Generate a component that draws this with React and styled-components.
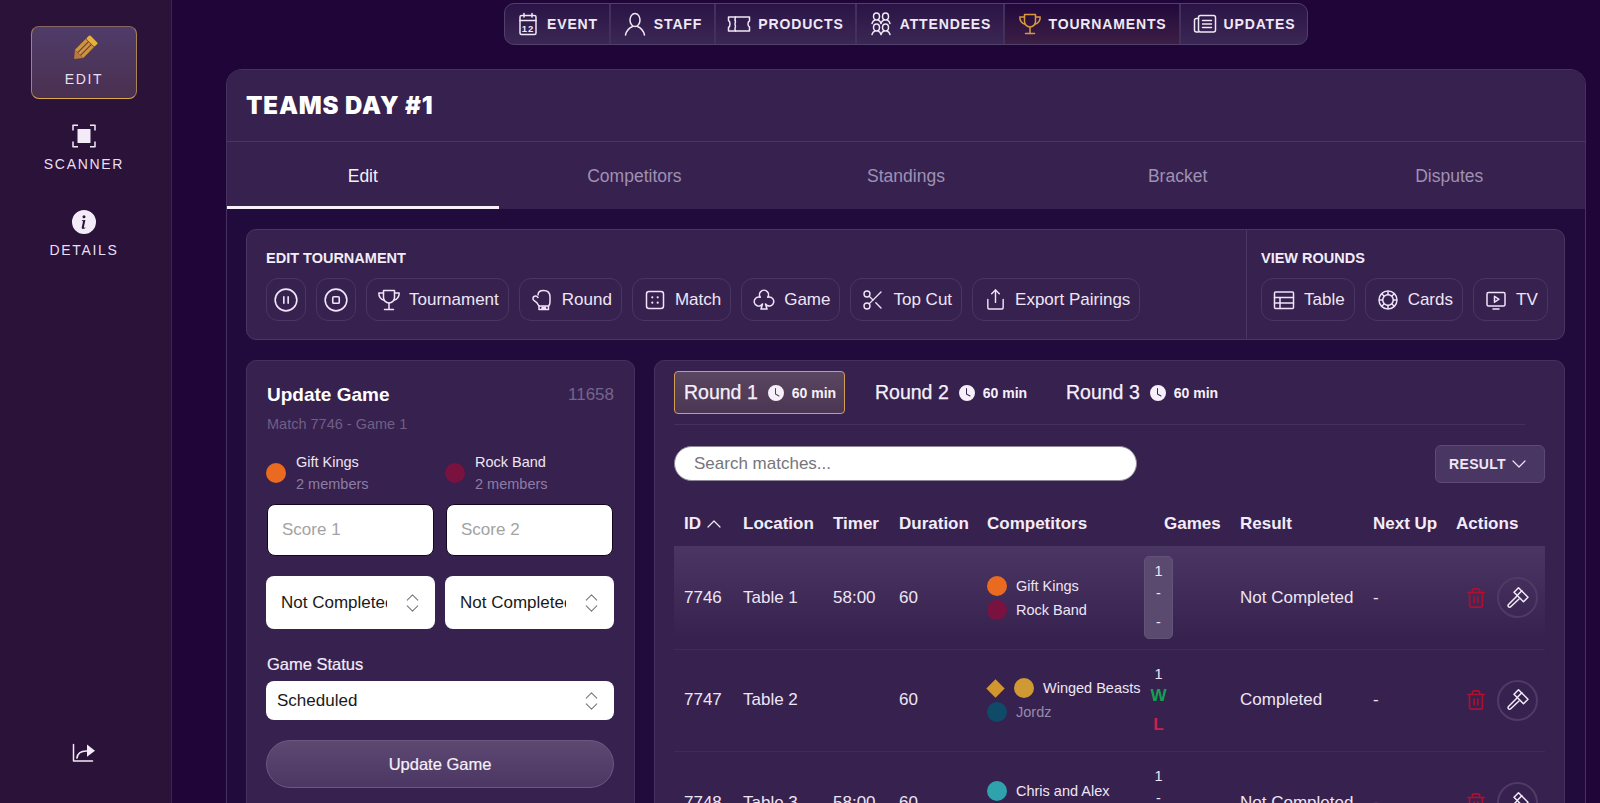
import styled, { createGlobalStyle } from "styled-components";
import {
  ChevronDown,
  ChevronUp,
  CirclePause,
  CircleStop,
  Scissors,
  Share,
  Trash2,
} from "lucide-react";
import { BsClockFill, BsInfoCircleFill } from "react-icons/bs";
import { PiClub, PiMonitorPlay, PiPokerChip } from "react-icons/pi";

const GlobalStyle = createGlobalStyle`
  html, body {
    margin: 0;
    height: 100%;
    overflow: hidden;
    background: #1f0538;
    color: #f3ecf8;
    font-family: "Liberation Sans", Arial, sans-serif;
  }
  * { box-sizing: border-box; }
`;

const Line = ({ children, size = 24 }) => (
  <svg width={size} height={size} viewBox="0 0 24 24" fill="none" stroke="currentColor" strokeWidth="1.5" strokeLinecap="round" strokeLinejoin="round">
    {children}
  </svg>
);

const PencilIcon = () => (
  <svg width="28" height="28" viewBox="0 0 24 24">
    <g transform="rotate(45 12 12)">
      <rect x="7" y="0" width="10" height="4.5" rx="1" fill="#e6b23c" />
      <rect x="7" y="5" width="10" height="13" fill="#d0923a" />
      <path d="M7 18h10l-5 6z" fill="#b9793a" />
      <path d="M10.300 5v13M13.700 5v13" stroke="#5a3f52" strokeWidth="0.9" />
    </g>
  </svg>
);

const ScannerIcon = () => (
  <Line>
    <path d="M1 6.500V1.200h5M23 6.500V1.200h-5M1 17.500v5.300h5M23 17.500v5.300h-5" strokeWidth="1.5" strokeLinecap="butt" />
    <rect x="5.500" y="5" width="13" height="14" fill="currentColor" stroke="none" />
  </Line>
);

const ExportIcon = () => (
  <Line>
    <path d="M1.500 3.500v16.500h19" />
    <path d="M5 17c.6-4.800 4.500-7.200 10-7" strokeWidth="1.700" />
    <path d="M15 3.500l8 6.300-8 6z" fill="currentColor" stroke="none" />
  </Line>
);

const CalendarIcon = () => (
  <Line>
    <rect x="4" y="3.500" width="16" height="19" rx="1.500" />
    <path d="M4 8.500h16M8 1.500v3.500M16 1.500v3.500" />
    <text x="12" y="19.500" textAnchor="middle" fontSize="9.500" fill="currentColor" stroke="none" fontFamily="Liberation Sans">12</text>
  </Line>
);

const StaffIcon = () => (
  <Line>
    <ellipse cx="12" cy="8" rx="5" ry="6.500" />
    <path d="M2.500 23c1-4.500 3.500-7 7-8.500M21.500 23c-1-4.500-3.500-7-7-8.500" />
  </Line>
);

const TicketIcon = () => (
  <Line>
    <path d="M1.500 5h21v4c-2 .7-2 5.300 0 6v4h-21v-3.500c2-1 2-6 0-7z" />
    <path d="M8.500 5c-.8 2-.8 3.500 0 4.500-.8 2-.8 3.500 0 5-.8 1.500-.8 3 0 4.500" />
  </Line>
);

const AttendeesIcon = () => (
  <Line>
    <ellipse cx="7.500" cy="4.500" rx="3" ry="3.500" />
    <ellipse cx="16.500" cy="4.500" rx="3" ry="3.500" />
    <path d="M3 11.500c.5-2 1.500-3 3-3.500M12 11.500c-.5-2-1.500-3-3-3.500M12 11.500c.5-2 1.500-3 3-3.500M21 11.500c-.5-2-1.500-3-3-3.500" />
    <ellipse cx="7.500" cy="15.500" rx="3" ry="3.500" />
    <ellipse cx="16.500" cy="15.500" rx="3" ry="3.500" />
    <path d="M3 22.500c.5-2 1.500-3 3-3.500M12 22.500c-.5-2-1.500-3-3-3.500M12 22.500c.5-2 1.500-3 3-3.500M21 22.500c-.5-2-1.500-3-3-3.500" />
  </Line>
);

const TrophyIcon = () => (
  <Line>
    <path d="M6.500 2.500h11v7a5.500 5.500 0 0 1-11 0z" />
    <path d="M6.500 5H1.800c0 4 2 6.500 5.500 7.300M17.500 5h4.700c0 4-2 6.500-5.500 7.300M12 15v6M7.500 21.500h9" />
  </Line>
);

const NewsIcon = () => (
  <Line>
    <rect x="5.500" y="3.500" width="17" height="16.500" rx="2" />
    <path d="M5.500 6.500H3.500a2 2 0 0 0-2 2V18a2 2 0 0 0 2 2h2M9.500 8.500h9M9.500 12h9M9.500 15.500h9" />
  </Line>
);

const GloveIcon = () => (
  <Line>
    <path d="M8 7C8 4 10 2.500 13.500 2.500c4 0 6.500 2.500 6.500 6.500v5c0 1.500-.5 3-1.500 4H9c-.8-1-1.500-2-2-3.200L3.500 12C2.500 10.500 3 8.800 4.500 8.200c1.300-.5 2.500 0 3.500 1.300" />
    <path d="M9 18v3.500h9.500V18M12 19l3.500 1.500M15.500 19L12 20.500" />
  </Line>
);

const DiceIcon = () => (
  <Line>
    <rect x="3.500" y="3.500" width="17" height="17" rx="2.500" />
    <g fill="currentColor" stroke="none">
      <circle cx="9.300" cy="9.300" r="1.100" />
      <circle cx="14.700" cy="9.300" r="1.100" />
      <circle cx="9.300" cy="14.700" r="1.100" />
      <circle cx="14.700" cy="14.700" r="1.100" />
    </g>
  </Line>
);

const TableIcon = () => (
  <Line>
    <rect x="2.500" y="4" width="19" height="16.500" rx="1" />
    <path d="M2.500 9.500h19M2.500 15h19M8 9.500v11" />
  </Line>
);

const GavelIcon = () => (
  <Line>
    <path d="M12.500 1.800l9.500 9.500-4.500 4.500L8 6.300z" />
    <path d="M15.800 4.800l-4.600 4.700" />
    <path d="M10.500 10.500l-8 8a1.500 1.500 0 0 0 2.200 2.200l8.300-7.700" />
  </Line>
);

const navItems = [
  { label: "EVENT", icon: <CalendarIcon /> },
  { label: "STAFF", icon: <StaffIcon /> },
  { label: "PRODUCTS", icon: <TicketIcon /> },
  { label: "ATTENDEES", icon: <AttendeesIcon /> },
  { label: "TOURNAMENTS", icon: <TrophyIcon />, active: true },
  { label: "UPDATES", icon: <NewsIcon /> },
];

const tabs = ["Edit", "Competitors", "Standings", "Bracket", "Disputes"];

const editTools = [
  { icon: <CirclePause size={26} strokeWidth={1.5} /> },
  { icon: <CircleStop size={26} strokeWidth={1.5} /> },
  { label: "Tournament", icon: <TrophyIcon /> },
  { label: "Round", icon: <GloveIcon /> },
  { label: "Match", icon: <DiceIcon /> },
  { label: "Game", icon: <PiClub size={24} /> },
  { label: "Top Cut", icon: <Scissors size={24} strokeWidth={1.4} /> },
  { label: "Export Pairings", icon: <Share size={23} strokeWidth={1.5} /> },
];

const viewTools = [
  { label: "Table", icon: <TableIcon /> },
  { label: "Cards", icon: <PiPokerChip size={24} /> },
  { label: "TV", icon: <PiMonitorPlay size={24} /> },
];

const rounds = ["Round 1", "Round 2", "Round 3"];

const columns = ["ID", "Location", "Timer", "Duration", "Competitors", "Games", "Result", "Next Up", "Actions"];

const matches = [
  {
    id: 7746,
    location: "Table 1",
    timer: "58:00",
    duration: 60,
    teams: [
      { name: "Gift Kings", color: "#ea6a1f" },
      { name: "Rock Band", color: "#7a1240" },
    ],
    games: ["1", "-", "-"],
    result: "Not Completed",
    current: true,
  },
  {
    id: 7747,
    location: "Table 2",
    timer: "",
    duration: 60,
    teams: [
      { name: "Winged Beasts", color: "#cf9a33", seeded: true },
      { name: "Jordz", color: "#0f4a68", out: true },
    ],
    games: ["1", "W", "L"],
    result: "Completed",
  },
  {
    id: 7748,
    location: "Table 3",
    timer: "58:00",
    duration: 60,
    teams: [
      { name: "Chris and Alex", color: "#2fa3ad" },
      { name: "Rock Band", color: "#7a1240" },
    ],
    games: ["1", "-", "-"],
    result: "Not Completed",
  },
];

const Steps = () => (
  <Stepper>
    <ChevronUp size={21} strokeWidth={1.2} />
    <ChevronDown size={21} strokeWidth={1.2} />
  </Stepper>
);

const App = () => (
  <Page>
    <GlobalStyle />
    <Sidebar>
      <SideItem $active>
        <PencilIcon />
        <SideLabel>EDIT</SideLabel>
      </SideItem>
      <SideItem>
        <ScannerIcon />
        <SideLabel>SCANNER</SideLabel>
      </SideItem>
      <SideItem>
        <BsInfoCircleFill size={24} />
        <SideLabel>DETAILS</SideLabel>
      </SideItem>
      <SideExport>
        <ExportIcon />
      </SideExport>
    </Sidebar>

    <Main>
      <TopNav>
        {navItems.map((item) => (
          <NavItem key={item.label} $active={item.active}>
            <NavIcon $active={item.active}>{item.icon}</NavIcon>
            {item.label}
          </NavItem>
        ))}
      </TopNav>

      <Card>
        <CardHeader>
          <Title>TEAMS DAY #1</Title>
        </CardHeader>
        <Tabs>
          {tabs.map((tab, i) => (
            <Tab key={tab} $active={i === 0}>
              {tab}
            </Tab>
          ))}
        </Tabs>

        <CardBody>
          <Toolbar>
            <ToolGroup>
              <ToolTitle>EDIT TOURNAMENT</ToolTitle>
              <ToolRow>
                {editTools.map((tool, i) => (
                  <ToolButton key={i} $round={!tool.label}>
                    <ToolIcon>{tool.icon}</ToolIcon>
                    {tool.label}
                  </ToolButton>
                ))}
              </ToolRow>
            </ToolGroup>
            <ViewGroup>
              <ToolTitle>VIEW ROUNDS</ToolTitle>
              <ToolRow>
                {viewTools.map((tool) => (
                  <ToolButton key={tool.label}>
                    <ToolIcon>{tool.icon}</ToolIcon>
                    {tool.label}
                  </ToolButton>
                ))}
              </ToolRow>
            </ViewGroup>
          </Toolbar>

          <Columns>
            <GamePanel>
              <GameHead>
                <GameTitle>Update Game</GameTitle>
                <GameId>11658</GameId>
              </GameHead>
              <GameSub>Match 7746 - Game 1</GameSub>
              <TwoCols>
                <TeamInfo>
                  <Dot $color="#ea6a1f" />
                  <div>
                    <TeamName>Gift Kings</TeamName>
                    <TeamMeta>2 members</TeamMeta>
                  </div>
                </TeamInfo>
                <TeamInfo>
                  <Dot $color="#7a1240" />
                  <div>
                    <TeamName>Rock Band</TeamName>
                    <TeamMeta>2 members</TeamMeta>
                  </div>
                </TeamInfo>
              </TwoCols>
              <ScoreRow>
                <ScoreInput placeholder="Score 1" />
                <ScoreInput placeholder="Score 2" />
              </ScoreRow>
              <SelectRow>
                <SelectWrap>
                  <StatusSelect defaultValue="nc">
                    <option value="nc">Not Completed</option>
                  </StatusSelect>
                  <Steps />
                </SelectWrap>
                <SelectWrap>
                  <StatusSelect defaultValue="nc">
                    <option value="nc">Not Completed</option>
                  </StatusSelect>
                  <Steps />
                </SelectWrap>
              </SelectRow>
              <FieldLabel>Game Status</FieldLabel>
              <SelectWrap>
                <WideSelect defaultValue="s">
                  <option value="s">Scheduled</option>
                </WideSelect>
                <Steps />
              </SelectWrap>
              <UpdateButton>Update Game</UpdateButton>
            </GamePanel>

            <MatchPanel>
              <RoundBar>
                {rounds.map((round, i) => (
                  <RoundTab key={round} $active={i === 0}>
                    <RoundName>{round}</RoundName>
                    <BsClockFill size={16} />
                    <RoundTime>60 min</RoundTime>
                  </RoundTab>
                ))}
              </RoundBar>
              <FilterRow>
                <SearchInput placeholder="Search matches..." />
                <ResultFilter>
                  RESULT
                  <ChevronDown size={24} strokeWidth={1.2} />
                </ResultFilter>
              </FilterRow>
              <HeadRow>
                {columns.map((col) => (
                  <HeadCell key={col} $games={col === "Games"}>
                    {col}
                    {col === "ID" && <ChevronUp size={24} strokeWidth={1.2} />}
                  </HeadCell>
                ))}
              </HeadRow>
              {matches.map((match) => (
                <MatchRow key={match.id} $current={match.current}>
                  <Cell>{match.id}</Cell>
                  <Cell>{match.location}</Cell>
                  <Cell>{match.timer}</Cell>
                  <Cell>{match.duration}</Cell>
                  <Cell>
                    <TeamStack>
                      {match.teams.map((team) => (
                        <TeamLine key={team.name} $out={team.out}>
                          {team.seeded && <Seed />}
                          <Dot $color={team.color} />
                          {team.name}
                        </TeamLine>
                      ))}
                    </TeamStack>
                  </Cell>
                  <GamesCell>
                    <GamesStack $current={match.current}>
                      {match.games.map((g, i) => (
                        <GameScore key={i} $value={g} $last={i === 2}>
                          {g}
                        </GameScore>
                      ))}
                    </GamesStack>
                  </GamesCell>
                  <Cell>{match.result}</Cell>
                  <Cell>-</Cell>
                  <ActionCell>
                    <TrashIcon>
                      <Trash2 size={22} strokeWidth={1.8} />
                    </TrashIcon>
                    <GavelButton>
                      <GavelIcon />
                    </GavelButton>
                  </ActionCell>
                </MatchRow>
              ))}
            </MatchPanel>
          </Columns>
        </CardBody>
      </Card>
    </Main>
  </Page>
);

export default App;

const Page = styled.div`
  display: flex;
  height: 100vh;
  overflow: hidden;
`;

const Sidebar = styled.aside`
  flex: 0 0 172px;
  display: flex;
  flex-direction: column;
  align-items: center;
  gap: 13px;
  padding: 26px 3px 38px 0;
  background: #2a1239;
  border-right: 1px solid #3a2450;
`;

const SideItem = styled.div`
  width: 106px;
  height: 73px;
  display: flex;
  flex-direction: column;
  align-items: center;
  padding-top: 12px;
  border-radius: 8px;
  ${(p) =>
    p.$active &&
    `
    padding-top: 8px;
    background: linear-gradient(180deg, #4f3c69 0%, #4a3050 100%);
    border: 1.5px solid #a98454;
    border-top-color: #86665f;
    border-bottom-color: #dca94c;
  `}
`;

const SideLabel = styled.span`
  margin-top: 7px;
  font-size: 14px;
  line-height: 18px;
  letter-spacing: 1.7px;
  color: #eadff2;
`;

const SideExport = styled.div`
  margin-top: auto;
  height: 24px;
`;

const Main = styled.main`
  flex: 1;
  min-width: 0;
  display: flex;
  flex-direction: column;
  align-items: center;
  padding: 3px 14px 0 54px;
`;

const TopNav = styled.nav`
  display: grid;
  grid-template-columns: 106px 105px 141px 148px 176px 126px;
  height: 42px;
  flex: none;
  background: linear-gradient(180deg, #2a1446 0%, #3b2754 100%);
  border: 1px solid #51406a;
  border-radius: 10px;
  overflow: hidden;
`;

const NavItem = styled.div`
  display: flex;
  align-items: center;
  justify-content: center;
  gap: 7px;
  font-size: 14px;
  font-weight: 700;
  letter-spacing: 0.85px;
  color: #efe8f5;
  border-right: 2px solid #43305c;
  &:last-child {
    border-right: none;
  }
  ${(p) => p.$active && `background: linear-gradient(180deg, #22093c 0%, #3c1f44 100%);`}
`;

const NavIcon = styled.span`
  display: flex;
  color: ${(p) => (p.$active ? "#d89a3c" : "#efe8f5")};
`;

const Card = styled.section`
  margin-top: 24px;
  width: 100%;
  flex: 1;
  background: #210a3c;
  border: 1px solid #463260;
  border-bottom: none;
  border-radius: 16px 16px 0 0;
  overflow: hidden;
`;

const CardHeader = styled.header`
  height: 72px;
  display: flex;
  align-items: center;
  padding-left: 19px;
  background: #37214f;
  border-bottom: 1px solid #4a3663;
`;

const Title = styled.h1`
  margin: 0;
  font-family: Inter, "Liberation Sans", sans-serif;
  font-size: 24px;
  font-weight: 900;
  letter-spacing: 0.85px;
  color: #fff;
`;

const Tabs = styled.div`
  display: grid;
  grid-template-columns: repeat(5, 1fr);
  height: 67px;
  background: #37214f;
`;

const Tab = styled.div`
  display: flex;
  align-items: center;
  justify-content: center;
  padding-top: 4px;
  font-size: 17.500px;
  color: ${(p) => (p.$active ? "#f6f0fa" : "#9f91b3")};
  border-bottom: 3px solid ${(p) => (p.$active ? "#f6f0fa" : "transparent")};
`;

const CardBody = styled.div`
  padding: 20px 20px 0 19px;
`;

const Toolbar = styled.div`
  display: flex;
  height: 111px;
  background: #37214f;
  border: 1px solid #4a3663;
  border-radius: 10px;
`;

const ToolGroup = styled.div`
  flex: 1;
  padding: 19px 0 0 19px;
`;

const ViewGroup = styled.div`
  flex: 0 0 318px;
  padding: 19px 0 0 14px;
  border-left: 1px solid #4a3663;
`;

const ToolTitle = styled.h3`
  margin: 0 0 10px;
  font-size: 14.500px;
  line-height: 19px;
  font-weight: 700;
  color: #f3ecf8;
`;

const ToolRow = styled.div`
  display: flex;
  gap: 10px;
`;

const ToolButton = styled.div`
  display: flex;
  align-items: center;
  justify-content: ${(p) => (p.$round ? "center" : "flex-start")};
  gap: 8px;
  height: 43px;
  width: ${(p) => (p.$round ? "40px" : "auto")};
  padding: ${(p) => (p.$round ? "0" : "0 9px 0 10px")};
  font-size: 17px;
  color: #eee6f4;
  border: 1px solid #4a3663;
  border-radius: 12px;
`;

const ToolIcon = styled.span`
  display: flex;
  align-items: center;
  justify-content: center;
  min-width: 24px;
  color: #efe4f8;
`;

const Columns = styled.div`
  display: flex;
  gap: 19px;
  margin-top: 20px;
  align-items: flex-start;
`;

const GamePanel = styled.div`
  flex: 0 0 389px;
  height: 500px;
  padding: 19px 20px 0 19px;
  background: #37214f;
  border: 1px solid #453160;
  border-radius: 10px;
`;

const GameHead = styled.div`
  display: flex;
  align-items: center;
  justify-content: space-between;
  height: 30px;
  padding-left: 1px;
`;

const GameTitle = styled.h2`
  margin: 0;
  font-size: 19px;
  font-weight: 700;
  color: #fff;
`;

const GameId = styled.span`
  font-size: 17px;
  color: #75658c;
`;

const GameSub = styled.p`
  margin: 4px 0 0 1px;
  font-size: 14.500px;
  line-height: 20px;
  color: #6f5f87;
`;

const TwoCols = styled.div`
  display: grid;
  grid-template-columns: 169px 169px;
  gap: 10px;
  margin-top: 17px;
`;

const TeamInfo = styled.div`
  display: flex;
  align-items: center;
  gap: 10px;
`;

const Dot = styled.span`
  flex: none;
  width: 20px;
  height: 20px;
  border-radius: 50%;
  background: ${(p) => p.$color};
`;

const TeamName = styled.div`
  font-size: 14.500px;
  line-height: 22px;
  color: #eee6f4;
`;

const TeamMeta = styled.div`
  font-size: 14.500px;
  line-height: 22px;
  color: #8d7da5;
`;

const ScoreRow = styled(TwoCols)`
  margin-top: 9px;
  padding: 0 1px;
  grid-template-columns: 167px 167px;
  gap: 12px;
`;

const ScoreInput = styled.input`
  height: 52px;
  width: 100%;
  padding: 0 14px;
  background: #fff;
  border: 1px solid #150622;
  border-radius: 8px;
  font-family: inherit;
  font-size: 17px;
  outline: none;
  &::placeholder {
    color: #a3a3a3;
    opacity: 1;
  }
`;

const SelectRow = styled(TwoCols)`
  margin-top: 20px;
`;

const SelectWrap = styled.div`
  position: relative;
`;

const StatusSelect = styled.select`
  display: block;
  appearance: none;
  width: 100%;
  height: 53px;
  padding: 0 48px 0 15px;
  background: #fff;
  color: #1a1a1a;
  border: none;
  border-radius: 8px;
  font-family: inherit;
  font-size: 17px;
  outline: none;
`;

const WideSelect = styled(StatusSelect)`
  height: 39px;
  padding-left: 11px;
`;

const Stepper = styled.span`
  position: absolute;
  top: 50%;
  right: 12px;
  transform: translateY(-50%);
  display: flex;
  flex-direction: column;
  color: #777;
  pointer-events: none;
  svg + svg {
    margin-top: -10px;
  }
`;

const FieldLabel = styled.div`
  margin: 23px 0 5px 1px;
  font-size: 16.500px;
  line-height: 24px;
  color: #f3ecf8;
  -webkit-text-stroke: 0.2px currentColor;
`;

const UpdateButton = styled.div`
  display: flex;
  align-items: center;
  justify-content: center;
  height: 48px;
  margin-top: 20px;
  background: linear-gradient(180deg, #5d4872 0%, #4c3764 100%);
  border: 1px solid #6b5880;
  border-radius: 24px;
  font-size: 16.500px;
  color: #f6f0fa;
  -webkit-text-stroke: 0.2px currentColor;
`;

const MatchPanel = styled.div`
  flex: 1;
  min-width: 0;
  height: 500px;
  padding: 10px 19px 0;
  background: #37214f;
  border: 1px solid #453160;
  border-radius: 10px;
`;

const RoundBar = styled.div`
  display: flex;
  gap: 20px;
  height: 54px;
  padding-bottom: 10px;
  margin-right: 20px;
  border-bottom: 1px solid #453160;
`;

const RoundTab = styled.div`
  width: 171px;
  display: flex;
  align-items: center;
  gap: 7px;
  padding-left: 9px;
  border: 1px solid transparent;
  border-radius: 4px;
  color: #f6f0fa;
  ${(p) =>
    p.$active &&
    `
    background: linear-gradient(180deg, #5b4661 0%, #4b3653 100%);
    border-color: #d19f59;
  `}
`;

const RoundName = styled.span`
  margin-right: 3px;
  font-size: 19.500px;
  -webkit-text-stroke: 0.25px currentColor;
`;

const RoundTime = styled.span`
  margin-left: 1px;
  font-size: 14px;
  font-weight: 700;
`;

const FilterRow = styled.div`
  display: flex;
  align-items: flex-start;
  justify-content: space-between;
  height: 38px;
  margin-top: 20px;
`;

const SearchInput = styled.input`
  width: 463px;
  height: 35px;
  margin-top: 1px;
  padding: 0 19px;
  background: #fff;
  border: 1px solid #8d8799;
  border-radius: 18px;
  font-family: inherit;
  font-size: 17px;
  outline: none;
  &::placeholder {
    color: #75757b;
    opacity: 1;
  }
`;

const ResultFilter = styled.div`
  width: 110px;
  height: 38px;
  display: flex;
  align-items: center;
  justify-content: center;
  gap: 1px;
  background: #4a3663;
  border: 1px solid #5d4a76;
  border-radius: 6px;
  font-size: 14px;
  font-weight: 700;
  letter-spacing: 0.3px;
  color: #eee6f4;
`;

const rowColumns = "59px 90px 66px 88px 167px 86px 133px 83px 99px";

const HeadRow = styled.div`
  display: grid;
  grid-template-columns: ${rowColumns};
  align-items: center;
  height: 64px;
  padding-top: 19px;
  border-bottom: 1px solid #4a3663;
`;

const HeadCell = styled.div`
  display: flex;
  align-items: center;
  gap: 1px;
  padding-left: ${(p) => (p.$games ? "20px" : "10px")};
  font-size: 17px;
  font-weight: 700;
  white-space: nowrap;
  color: #f3ecf8;
`;

const MatchRow = styled.div`
  display: grid;
  grid-template-columns: ${rowColumns};
  align-items: center;
  height: 102.500px;
  border-bottom: 1px solid #41295a;
  background: ${(p) => (p.$current ? "linear-gradient(180deg, #4b3562 0%, #37214f 90%)" : "transparent")};
`;

const Cell = styled.div`
  padding-left: 10px;
  font-size: 17px;
  white-space: nowrap;
  color: #eee6f4;
`;

const TeamStack = styled.div`
  display: flex;
  flex-direction: column;
`;

const TeamLine = styled.div`
  display: flex;
  align-items: center;
  gap: 9px;
  height: 24px;
  font-size: 14.500px;
  color: ${(p) => (p.$out ? "#978aa9" : "#eee6f4")};
`;

const Seed = styled.span`
  flex: none;
  width: 13px;
  height: 13px;
  margin: 0 3px 0 2px;
  background: #d2962f;
  transform: rotate(45deg);
`;

const GamesCell = styled.div`
  width: 29px;
`;

const GamesStack = styled.div`
  display: flex;
  flex-direction: column;
  align-items: center;
  padding: 3px 0 5px;
  border-radius: 5px;
  background: ${(p) => (p.$current ? "#5b4a70" : "transparent")};
  border: ${(p) => (p.$current ? "1px solid #64527a" : "1px solid transparent")};
`;

const GameScore = styled.span`
  line-height: 22px;
  margin-top: ${(p) => (p.$last ? "7px" : "0")};
  font-size: ${(p) => (p.$value === "W" || p.$value === "L" ? "17px" : "14.500px")};
  font-weight: ${(p) => (p.$value === "W" || p.$value === "L" ? 700 : 400)};
  color: ${(p) => (p.$value === "W" ? "#12a150" : p.$value === "L" ? "#cc2149" : "#eee6f4")};
`;

const ActionCell = styled.div`
  display: flex;
  align-items: center;
  gap: 10px;
  padding-left: 19px;
`;

const TrashIcon = styled.span`
  display: flex;
  color: #b01030;
`;

const GavelButton = styled.span`
  display: flex;
  align-items: center;
  justify-content: center;
  width: 41px;
  height: 41px;
  border: 2px solid #4f3b66;
  border-radius: 50%;
  color: #f3ecf8;
`;
